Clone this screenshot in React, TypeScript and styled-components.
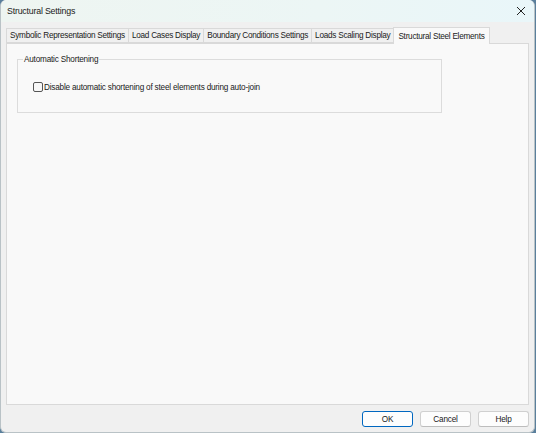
import React from "react";
import styled, { createGlobalStyle } from "styled-components";

const Global = createGlobalStyle`
  html, body { margin: 0; padding: 0; background: #5a7f9c; }
  body { width: 536px; height: 433px; overflow: hidden; }
  * { box-sizing: border-box; }
`;

const FONT = `"Liberation Sans", Arial, sans-serif`;

const Window = styled.div`
  width: 535px;
  height: 433px;
  display: flex;
  flex-direction: column;
  background: #f0f0f0;
  border: 1px solid #b9c2c6;
  border-top: none;
  border-radius: 6px;
  overflow: hidden;
  font-family: ${FONT};
  font-size: 8.2px;
  letter-spacing: -0.2px;
  color: #1a1a1a;
`;

const TitleBar = styled.div`
  height: 22px;
  flex: none;
  display: flex;
  align-items: center;
  justify-content: space-between;
  padding: 0 6px 0 6px;
  background: linear-gradient(90deg, #eef5f1 0%, #ecf6f5 60%, #e9f6f9 100%);
  font-size: 8.8px;
`;

const Close = styled.div`
  width: 14px;
  height: 14px;
  display: flex;
  align-items: center;
  justify-content: center;
`;

const Body = styled.div`
  flex: 1;
  display: flex;
  flex-direction: column;
  padding: 4px 5px 0 5px;
`;

const TabStrip = styled.div`
  display: flex;
  align-items: flex-end;
  height: 17px;
  flex: none;
  position: relative;
  z-index: 1;
`;

const Tab = styled.div<{ $active?: boolean }>`
  height: ${(p) => (p.$active ? "17px" : "15px")};
  padding: 0 ${(p) => (p.$active ? "4px" : "3px")};
  display: flex;
  align-items: center;
  background: ${(p) => (p.$active ? "#f9f9f9" : "#f0f0f0")};
  border: 1px solid #d9d9d9;
  border-bottom: ${(p) => (p.$active ? "none" : "1px solid #d9d9d9")};
  margin-left: -1px;
  margin-bottom: ${(p) => (p.$active ? "-1px" : "0")};
  letter-spacing: -0.25px;
  white-space: nowrap;
  &:first-child { margin-left: 0; }
`;

const Panel = styled.div`
  flex: 1;
  background: #f9f9f9;
  border: 1px solid #d9d9d9;
  padding: 11px 0 0 10px;
`;

const Group = styled.fieldset`
  width: 425px;
  height: 58px;
  margin: 0;
  padding: 0 0 0 15px;
  border: 1px solid #dcdcdc;
  border-radius: 0;
`;

const Legend = styled.legend`
  padding: 0 1px;
  margin-left: -10px;
`;

const CheckRow = styled.label`
  display: flex;
  align-items: center;
  gap: 1px;
  margin-top: 18px;
`;

const Box = styled.span`
  width: 10px;
  height: 10px;
  border: 1px solid #555;
  border-radius: 2px;
  background: #f7f7f7;
`;

const Buttons = styled.div`
  display: flex;
  justify-content: flex-end;
  gap: 7px;
  padding: 6px 0 5px 0;
  flex: none;
`;

const Button = styled.div<{ $primary?: boolean }>`
  width: 51px;
  height: 16px;
  display: flex;
  align-items: center;
  justify-content: center;
  background: #fdfdfd;
  border: 1px solid ${(p) => (p.$primary ? "#0067c0" : "#d0d0d0")};
  border-bottom-color: ${(p) => (p.$primary ? "#0067c0" : "#bdbdbd")};
  border-radius: 3px;
`;

export default function App() {
  return (
    <>
      <Global />
      <Window>
        <TitleBar>
          <span>Structural Settings</span>
          <Close>
            <svg width="10" height="10" viewBox="0 0 10 10">
              <path d="M1 1 L9 9 M9 1 L1 9" stroke="#222" strokeWidth="1" />
            </svg>
          </Close>
        </TitleBar>
        <Body>
          <TabStrip>
            <Tab>Symbolic Representation Settings</Tab>
            <Tab>Load Cases Display</Tab>
            <Tab>Boundary Conditions Settings</Tab>
            <Tab>Loads Scaling Display</Tab>
            <Tab $active>Structural Steel Elements</Tab>
          </TabStrip>
          <Panel>
            <Group>
              <Legend>Automatic Shortening</Legend>
              <CheckRow>
                <Box />
                <span>Disable automatic shortening of steel elements during auto-join</span>
              </CheckRow>
            </Group>
          </Panel>
          <Buttons>
            <Button $primary>OK</Button>
            <Button>Cancel</Button>
            <Button>Help</Button>
          </Buttons>
        </Body>
      </Window>
    </>
  );
}
